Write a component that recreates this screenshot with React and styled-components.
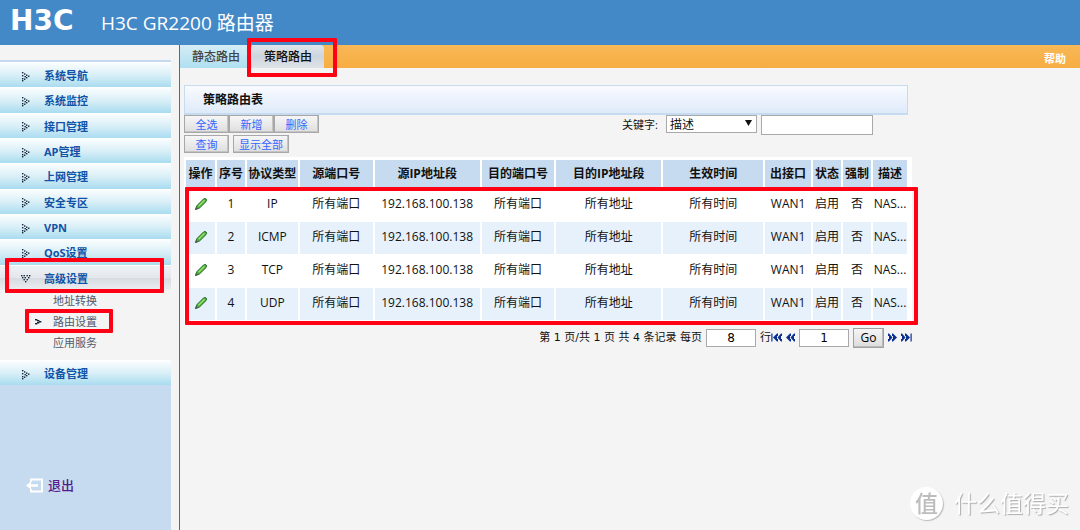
import React, { useState } from "react";
import styled, { createGlobalStyle, css } from "styled-components";

const GlobalStyle = createGlobalStyle`
  * {
    box-sizing: border-box;
  }
  body {
    margin: 0;
    background: #f4f4f4;
    color: #111;
    font-family: "Open Sans", "Noto Sans CJK SC", sans-serif;
    font-size: 12px;
    line-height: 16px;
  }
  a {
    color: inherit;
    text-decoration: none;
  }
  ul {
    list-style: none;
    margin: 0;
    padding: 0;
  }
  button, input, select {
    font: inherit;
    margin: 0;
  }
`;

const Page = styled.div`
  display: flex;
  flex-direction: column;
  min-height: 100vh;
`;

const Header = styled.header`
  display: flex;
  align-items: center;
  gap: 18px;
  height: 45px;
  padding: 0 10px;
  background: #4388c7;
  color: #fff;
`;

const Logo = styled.span`
  width: 73px;
  padding-bottom: 4px;
  font-family: "DejaVu Sans", sans-serif;
  font-size: 28px;
  font-weight: bold;
  line-height: 28px;
  white-space: nowrap;
`;

const Product = styled.h1`
  margin: 0;
  font-size: 19px;
  font-weight: normal;
  line-height: 24px;
`;

const Body = styled.div`
  display: flex;
  flex: 1;
`;

const Sidebar = styled.aside`
  display: flex;
  flex-direction: column;
  flex: none;
  width: 180px;
  padding: 15px 8px 0 0;
  border-right: 1px solid #2a6fe0;
`;

const Menu = styled.ul`
  display: grid;
  grid-auto-rows: 1fr;
  min-height: ${(props) => props.$height}px;
`;

const TopMenu = styled(Menu)`
  border-top: 2px solid #c6dbef;
`;

const MenuItem = styled.li`
  position: relative;
  display: flex;
`;

const MenuLink = styled.a`
  display: flex;
  flex: 1;
  align-items: center;
  gap: 13px;
  padding: 2px 0 0 20px;
  border-top: 1px solid #fff;
  background: ${(props) =>
    props.$open
      ? "linear-gradient(#eef1f4 0%, #e3e7ec 50%, #d6dce2 51%, #ebedf0 100%)"
      : "linear-gradient(#fafdfe 0%, #d9eff7 50%, #a9dcf0 100%)"};
  color: #1153a6;
  font-size: 11px;
  font-weight: bold;
`;

const SubMenu = styled.ul`
  display: flex;
  flex-direction: column;
  padding: 0 0 7px 27px;
`;

const SubItem = styled.li`
  position: relative;
  display: flex;
  align-items: center;
  height: 21px;
`;

const SubLink = styled.a`
  display: flex;
  align-items: center;
  padding-left: ${(props) => (props.$active ? 7 : 26)}px;
  gap: 11px;
  color: #4e5a6e;
  font-size: 11px;
`;

const SidebarFoot = styled.div`
  flex: 1;
  padding: 90px 0 0 26px;
  background: #c6dbef;
`;

const Logout = styled.a`
  display: inline-flex;
  align-items: center;
  gap: 4px;
  color: #551a8b;
  font-size: 13px;
  font-weight: 500;
  line-height: 20px;
`;

const Main = styled.main`
  flex: 1;
  min-width: 0;
`;

const TabBar = styled.nav`
  display: flex;
  height: 23px;
  background: linear-gradient(#f8b856, #f7ad42);
`;

const TabSlot = styled.div`
  position: relative;
  display: flex;
`;

const Tab = styled.a`
  display: flex;
  align-items: center;
  justify-content: center;
  width: 72px;
  border-radius: 0 4px 0 0;
  font-weight: 500;
  ${(props) =>
    props.$active
      ? css`
          background: linear-gradient(#e0e5ea 0%, #cdd5dd 50%, #dfe3e7 100%);
          color: #111;
        `
      : css`
          background: linear-gradient(#d5edf5, #aedff1);
          color: #444;
        `}
`;

const Help = styled.a`
  margin-left: auto;
  padding: 6px 14px 0 0;
  color: #fff;
  font-size: 11px;
  font-weight: bold;
`;

const Content = styled.div`
  max-width: 732px;
  padding: 17px 0 0 4px;
`;

const PanelTitle = styled.h2`
  margin: 0 4px 0 0;
  padding: 6px 18px 5px;
  border: 1px solid #c6dbef;
  border-bottom-width: 2px;
  background: linear-gradient(#f9fbff, #deeafa);
  font-size: 12px;
  line-height: 16px;
`;

const Toolbar = styled.div`
  display: flex;
  justify-content: space-between;
  align-items: flex-start;
  padding: 0 39px 4px 0;
`;

const Actions = styled.div`
  display: flex;
  flex-direction: column;
  gap: 2px;
`;

const ButtonRow = styled.div`
  display: flex;
  gap: ${(props) => props.$gap || 0}px;
`;

const ToolButton = styled.button`
  min-width: 45px;
  height: 18px;
  padding: 1px 5px 0;
  border: 1px solid #a8a8a8;
  box-shadow: inset -1px -1px #c4c4c4;
  background: linear-gradient(#f6f6f6, #dedede);
  color: #3366ff;
  font-size: 11px;
  line-height: 15px;
`;

const Search = styled.div`
  display: flex;
  align-items: flex-start;
  gap: 4px;

  label {
    padding: 2px 4px 0 0;
    font-size: 11px;
  }
`;

const SelectBox = styled.div`
  position: relative;

  svg {
    position: absolute;
    top: 5px;
    right: 5px;
    pointer-events: none;
  }
`;

const Select = styled.select`
  display: block;
  width: 91px;
  height: 18px;
  padding: 0 3px;
  border: 1px solid #a9a9a9;
  border-radius: 0;
  background: #fff;
  color: #111;
  line-height: 15px;
  appearance: none;
`;

const TextInput = styled.input`
  width: ${(props) => props.$width}px;
  height: ${(props) => props.$height}px;
  padding: 0 2px;
  border: 1px solid #a9a9a9;
  background: #fff;
  font-size: 12px;
  text-align: ${(props) => props.$align || "left"};
`;

const TableBox = styled.div`
  position: relative;
  padding: 3px 3px 2px 2px;
  background: #fff;
`;

const Table = styled.table`
  width: 100%;
  border-collapse: collapse;
  table-layout: fixed;
  text-align: center;

  th, td {
    padding: 0;
    border-right: 2px solid #fff;
    overflow: hidden;
    white-space: nowrap;
  }
  th {
    height: 28px;
    background: #c6dbef;
  }
  td {
    height: 33px;
    padding-bottom: 2px;
    border-top: 1px solid #fff;
    border-bottom: 1px solid #fff;
  }
  tbody tr:nth-child(even) td {
    background: #e6f1fc;
  }
`;

const EditButton = styled.button`
  display: inline-flex;
  padding: 0 0 0 1px;
  border: 0;
  background: none;
  vertical-align: middle;
`;

const Pager = styled.div`
  display: flex;
  align-items: center;
  justify-content: flex-end;
  gap: 4px;
  padding-top: 5px;
  font-family: "DejaVu Sans", "Noto Sans CJK SC", sans-serif;
  font-size: 11px;
`;

const PageArrow = styled.button`
  display: flex;
  padding: 0;
  border: 0;
  background: none;
`;

const LineUnit = styled.span`
  display: flex;
  align-items: center;
`;

const GoButton = styled.button`
  width: 31px;
  height: 20px;
  padding: 0;
  border: 1px solid #a0a0a0;
  box-shadow: inset -1px -1px #bbb;
  background: linear-gradient(#f5f5f5, #dcdcdc);
  font-family: "Open Sans", sans-serif;
  font-size: 12px;
`;

const Marker = styled.span`
  position: absolute;
  inset: ${(props) => props.$inset};
  border: 4px solid #ff0014;
  border-radius: 1px;
  pointer-events: none;
  z-index: 1;
`;

const Watermark = styled.div`
  position: fixed;
  right: 11px;
  bottom: 10px;
  display: flex;
  align-items: center;
  gap: 11px;
  color: #fff;
  font-size: 23px;
  line-height: 34px;
  text-shadow: 1px 1px 1px #aaa;
`;

const Seal = styled.span`
  display: flex;
  align-items: center;
  justify-content: center;
  width: 33px;
  height: 33px;
  border-radius: 50%;
  background: #fff;
  box-shadow: 1px 1px 1px #bbb;
  color: #bdbdbd;
  font-weight: 500;
  text-shadow: none;
`;

const Dots = ({ points, size = 11, width = 11 }) => (
  <svg width={width} height={size} viewBox={`0 0 ${width} ${size}`}>
    {points.map(([x, y]) => (
      <rect key={`${x}-${y}`} x={x} y={y} width="1.4" height="1.4" fill="#16243a" />
    ))}
  </svg>
);

const RIGHT = [[2, 1], [4, 2.3], [2, 4], [6, 3.500], [4.500, 5], [8, 4.500], [6, 6], [2, 7], [4, 7.500], [2, 9]];
const DOWN = [[1, 2], [3.500, 2], [6.500, 2], [9, 2], [2, 4], [4.500, 4], [8, 4], [3.500, 6], [6.500, 6], [5, 8]];
const SMALL = [[1, 2], [2, 2], [3, 3], [4, 3], [5, 4], [6, 4], [3, 5], [4, 5], [1, 6], [2, 6]];

const Pencil = () => (
  <svg width="14" height="14" viewBox="0 0 14 14">
    <path d="M1.500 12.500l1.500-4L9.500 2q1.500-1.200 2.600 0t0 2.500L5.500 11z" fill="#4fae3c" stroke="#25702a" />
    <path d="M4.500 9.300l6-6" stroke="#9be070" strokeWidth="1.500" />
    <path d="M1 13l1-3 2 2z" fill="#555" />
  </svg>
);

const Arrows = ({ back, edge }) => {
  const width = edge ? 11 : 9;
  return (
    <svg width={width} height="9" viewBox={`0 0 ${width} 9`} fill="#0b2f91">
      <g transform={back ? `translate(${width} 0) scale(-1 1)` : undefined}>
        <path d="M0 .5h1l3.500 4L1 8.500H0V6h1V3H0zM4 .5h1l4 4-4 4H4V6h1V3H4z" />
        {edge && <path d="M9.500 .5h1.200v8h-1.200z" />}
      </g>
    </svg>
  );
};

const ExitIcon = () => (
  <svg width="18" height="15" viewBox="0 0 18 15" fill="none" stroke="#fff" strokeWidth="2">
    <path d="M5 4V1.500h11v12H5V11" />
    <path d="M3 7.500h9" strokeWidth="2.500" />
    <path d="M0 7.500l5-4v8z" fill="#fff" stroke="none" />
  </svg>
);

const menu = ["系统导航", "系统监控", "接口管理", "AP管理", "上网管理", "安全专区", "VPN", "QoS设置", "高级设置"];
const subMenu = ["地址转换", "路由设置", "应用服务"];

const columns = [
  ["操作", 30],
  ["序号", 30],
  ["协议类型", 53],
  ["源端口号", 75],
  ["源IP地址段", 107],
  ["目的端口号", 75],
  ["目的IP地址段", 107],
  ["生效时间", 102],
  ["出接口", 48],
  ["状态", 30],
  ["强制", 30],
  ["描述", 36],
];

const rules = ["IP", "ICMP", "TCP", "UDP"].map((protocol, index) => ({
  id: index + 1,
  cells: [
    index + 1,
    protocol,
    "所有端口",
    "192.168.100.138",
    "所有端口",
    "所有地址",
    "所有时间",
    "WAN1",
    "启用",
    "否",
    "NAS...",
  ],
}));

const Navigation = () => (
  <Sidebar>
    <TopMenu $height={230}>
      {menu.map((name) => {
        const open = name === "高级设置";
        return (
          <MenuItem key={name}>
            <MenuLink href="#" $open={open}>
              <Dots points={open ? DOWN : RIGHT} />
              {name}
            </MenuLink>
            {open && <Marker $inset="-7px 7px -3px 5px" />}
          </MenuItem>
        );
      })}
    </TopMenu>
    <SubMenu>
      {subMenu.map((name) => {
        const active = name === "路由设置";
        return (
          <SubItem key={name}>
            <SubLink href="#" $active={active}>
              {active && <Dots points={SMALL} size={9} width={8} />}
              {name}
            </SubLink>
            {active && <Marker $inset="-2px 58px -1px -2px" />}
          </SubItem>
        );
      })}
    </SubMenu>
    <Menu $height={25}>
      <MenuItem>
        <MenuLink href="#">
          <Dots points={RIGHT} />
          设备管理
        </MenuLink>
      </MenuItem>
    </Menu>
    <SidebarFoot>
      <Logout href="#">
        <ExitIcon />
        退出
      </Logout>
    </SidebarFoot>
  </Sidebar>
);

const RuleTable = () => (
  <TableBox>
    <Table>
      <colgroup>
        {columns.map(([name, width]) => (
          <col key={name} style={{ width: `${(width / 723) * 100}%` }} />
        ))}
      </colgroup>
      <thead>
        <tr>
          {columns.map(([name]) => (
            <th key={name}>{name}</th>
          ))}
        </tr>
      </thead>
      <tbody>
        {rules.map((rule) => (
          <tr key={rule.id}>
            <td>
              <EditButton aria-label="编辑">
                <Pencil />
              </EditButton>
            </td>
            {rule.cells.map((cell, key) => (
              <td key={key}>{cell}</td>
            ))}
          </tr>
        ))}
      </tbody>
    </Table>
    <Marker $inset="30px -6px -2px 1px" />
  </TableBox>
);

const App = () => {
  const [keyword, setKeyword] = useState("");
  const [rows, setRows] = useState("8");
  const [page, setPage] = useState("1");

  return (
    <Page>
      <GlobalStyle />
      <Header>
        <Logo>H3C</Logo>
        <Product>H3C GR2200 路由器</Product>
      </Header>
      <Body>
        <Navigation />
        <Main>
          <TabBar>
            <TabSlot>
              <Tab href="#">静态路由</Tab>
            </TabSlot>
            <TabSlot>
              <Tab href="#" $active>策略路由</Tab>
              <Marker $inset="-7px -13px -9px -5px" />
            </TabSlot>
            <Help href="#">帮助</Help>
          </TabBar>
          <Content>
            <PanelTitle>策略路由表</PanelTitle>
            <Toolbar>
              <Actions>
                <ButtonRow>
                  <ToolButton>全选</ToolButton>
                  <ToolButton>新增</ToolButton>
                  <ToolButton>删除</ToolButton>
                </ButtonRow>
                <ButtonRow $gap={4}>
                  <ToolButton>查询</ToolButton>
                  <ToolButton>显示全部</ToolButton>
                </ButtonRow>
              </Actions>
              <Search>
                <label htmlFor="field">关键字:</label>
                <SelectBox>
                  <Select id="field">
                    <option>描述</option>
                  </Select>
                  <svg width="7" height="6" viewBox="0 0 7 6">
                    <path d="M0 0h7L3.500 6z" fill="#111" />
                  </svg>
                </SelectBox>
                <TextInput
                  aria-label="关键字"
                  $width={112}
                  $height={20}
                  value={keyword}
                  onChange={(e) => setKeyword(e.target.value)}
                />
              </Search>
            </Toolbar>
            <RuleTable />
            <Pager>
              <label htmlFor="rows">第 1 页/共 1 页 共 4 条记录 每页</label>
              <TextInput
                id="rows"
                $width={50}
                $height={18}
                $align="center"
                value={rows}
                onChange={(e) => setRows(e.target.value)}
              />
              <LineUnit>
                行
                <PageArrow aria-label="首页"><Arrows back edge /></PageArrow>
              </LineUnit>
              <PageArrow aria-label="上一页"><Arrows back /></PageArrow>
              <TextInput
                aria-label="页码"
                $width={50}
                $height={18}
                $align="center"
                value={page}
                onChange={(e) => setPage(e.target.value)}
              />
              <GoButton>Go</GoButton>
              <PageArrow aria-label="下一页"><Arrows /></PageArrow>
              <PageArrow aria-label="尾页"><Arrows edge /></PageArrow>
            </Pager>
          </Content>
        </Main>
      </Body>
      <Watermark>
        <Seal>值</Seal>
        什么值得买
      </Watermark>
    </Page>
  );
};

export default App;
